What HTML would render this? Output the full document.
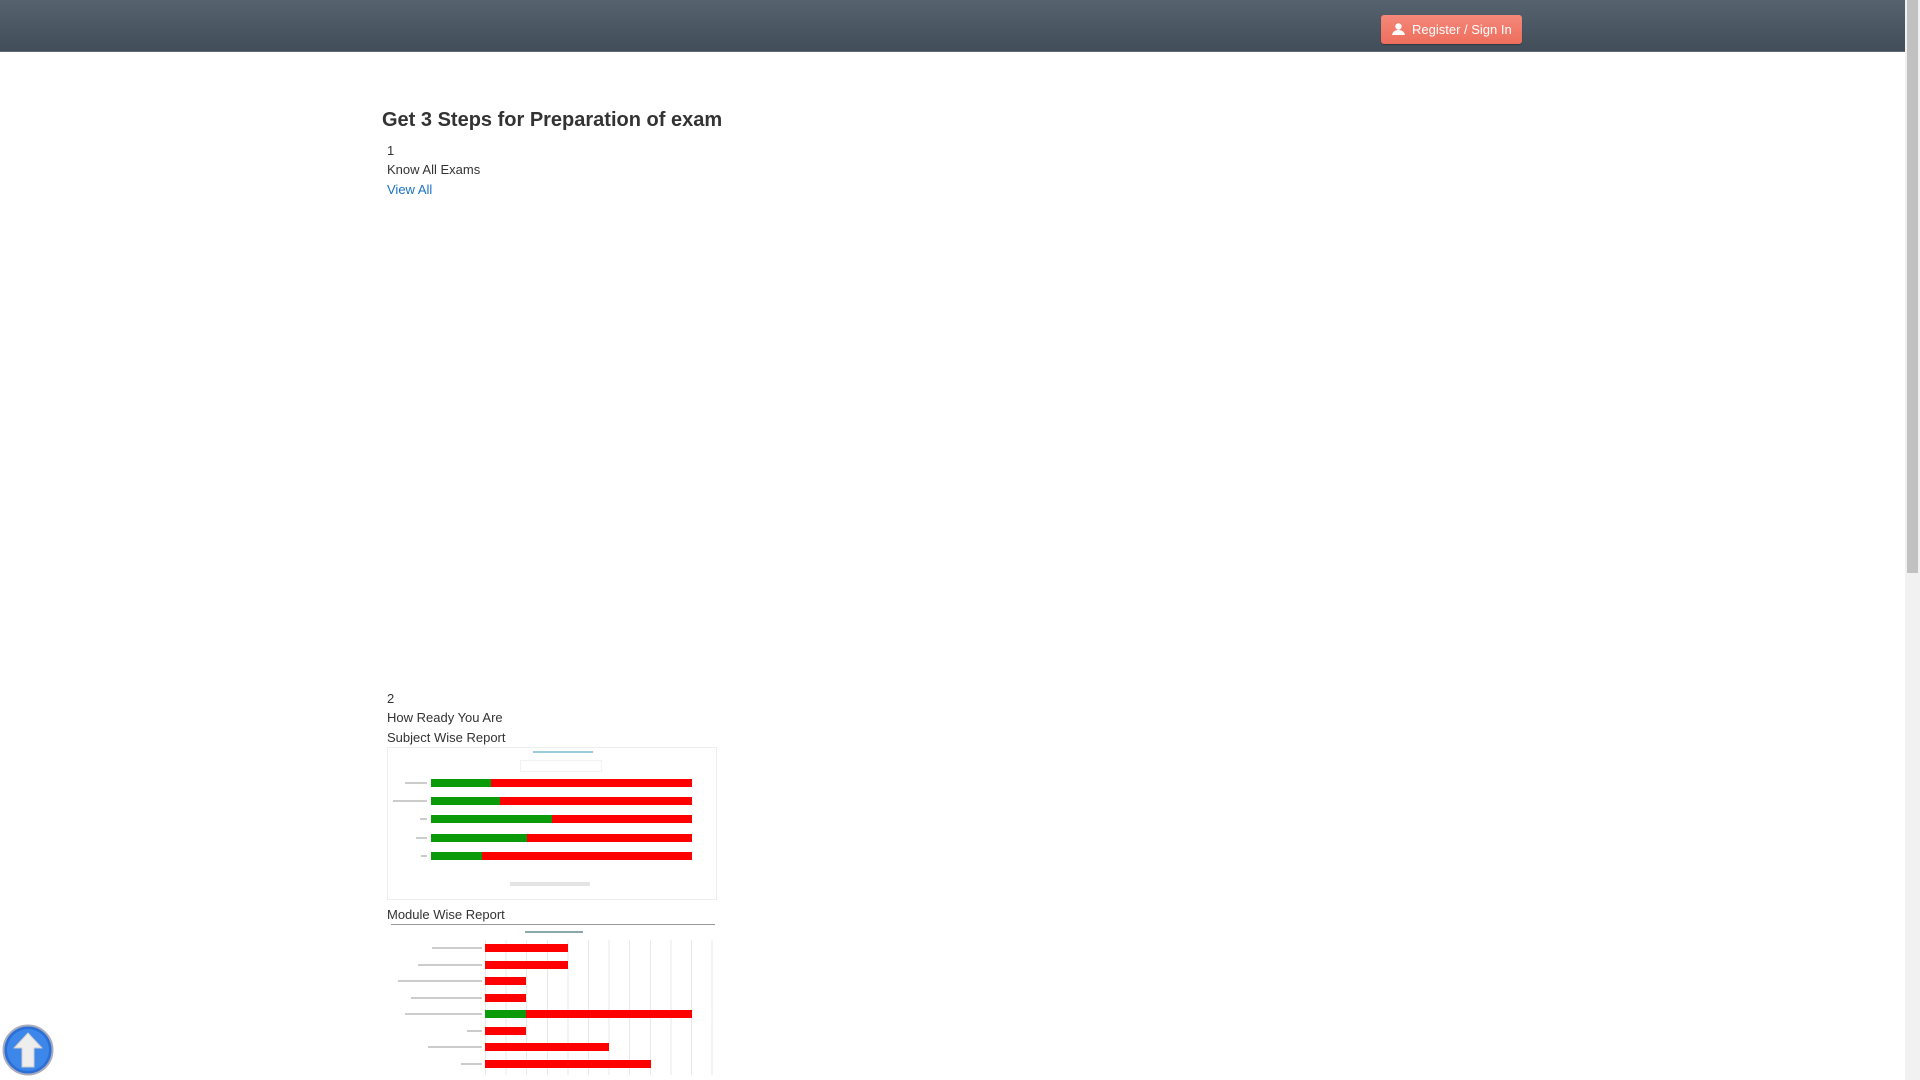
<!DOCTYPE html>
<html><head><style>
body{margin:0;width:1920px;height:1080px;overflow:hidden;background:#fff;font-family:"Liberation Sans",Arial,sans-serif;color:#333;position:relative}
.nav{position:absolute;left:0;top:0;width:1905px;height:51px;background:linear-gradient(#56626e,#414d59);border-bottom:1px solid #5d6772}
.sb{position:absolute;right:0;top:0;width:15px;height:1080px;background:#f1f1f1}
.sb div{position:absolute;left:2px;top:0;width:11px;height:573px;background:#c1c1c1}
.btn{position:absolute;left:1381px;top:15px;width:141px;height:29px;background:linear-gradient(#f4887a,#ee6e5d);border-radius:3px;color:#fff;font-size:13px;line-height:29px;box-shadow:0 1px 1px rgba(0,0,0,.3)}
.btn span{position:absolute;left:31px}
.t{position:absolute;left:387px;font-size:13px}
h1{position:absolute;left:382px;top:109px;margin:0;font-size:20px;font-weight:bold;color:#333}
.bar{position:absolute;height:8px}
.g{background:#0a9a0a}.r{background:#f00}
.lbl{position:absolute;height:2px;background:#ccc}
</style></head><body>
<div class="nav"></div>
<div class="sb"><div></div></div>
<div class="btn"><svg style="position:absolute;left:11px;top:8px" width="13" height="12" viewBox="0 0 13 12"><circle cx="6.5" cy="3.5" r="3.2" fill="#fff"/><path d="M0 12 Q1 7 6.5 7 Q12 7 13 12Z" fill="#fff"/></svg><span>Register / Sign In</span></div>
<h1>Get 3 Steps for Preparation of exam</h1>
<div class="t" style="top:143px">1</div>
<div class="t" style="top:162px">Know All Exams</div>
<div class="t" style="top:182px;color:#1a73c8">View All</div>
<div class="t" style="top:691px">2</div>
<div class="t" style="top:710px">How Ready You Are</div>
<div class="t" style="top:730px">Subject Wise Report</div>
<div style="position:absolute;left:387px;top:747px;width:328px;height:151px;border:1px solid #eee"></div>
<div style="position:absolute;left:533px;top:751px;width:60px;height:2px;background:#9cd"></div>
<div style="position:absolute;left:520px;top:760px;width:80px;height:10px;border:1px solid #f2f2f2"></div>
<div class="lbl" style="left:405px;top:782px;width:22px"></div>
<div class="lbl" style="left:393px;top:800px;width:34px"></div>
<div class="lbl" style="left:420px;top:818px;width:7px"></div>
<div class="lbl" style="left:416px;top:837px;width:11px"></div>
<div class="lbl" style="left:421px;top:855px;width:6px"></div>
<div class="bar g" style="left:431px;top:779px;width:60px"></div><div class="bar r" style="left:491px;top:779px;width:201px"></div>
<div class="bar g" style="left:431px;top:797px;width:69px"></div><div class="bar r" style="left:500px;top:797px;width:192px"></div>
<div class="bar g" style="left:431px;top:815px;width:121px"></div><div class="bar r" style="left:552px;top:815px;width:140px"></div>
<div class="bar g" style="left:431px;top:834px;width:96px"></div><div class="bar r" style="left:527px;top:834px;width:165px"></div>
<div class="bar g" style="left:431px;top:852px;width:51px"></div><div class="bar r" style="left:482px;top:852px;width:210px"></div>
<div style="position:absolute;left:510px;top:882px;width:80px;height:4px;background:#e4e4e4"></div>
<div class="t" style="top:907px">Module Wise Report</div>
<div style="position:absolute;left:391px;top:924px;width:324px;height:1px;background:#999"></div>
<div style="position:absolute;left:525px;top:931px;width:58px;height:2px;background:#8aa"></div>
<div style="position:absolute;left:485px;top:940px;width:230px;height:135px;background:repeating-linear-gradient(90deg,#e8e8e8 0 1px,transparent 1px 20.6px)"></div>
<div class="lbl" style="left:432px;top:947px;width:50px"></div>
<div class="lbl" style="left:418px;top:964px;width:64px"></div>
<div class="lbl" style="left:398px;top:980px;width:84px"></div>
<div class="lbl" style="left:411px;top:997px;width:71px"></div>
<div class="lbl" style="left:405px;top:1013px;width:77px"></div>
<div class="lbl" style="left:467px;top:1030px;width:15px"></div>
<div class="lbl" style="left:428px;top:1046px;width:54px"></div>
<div class="lbl" style="left:461px;top:1063px;width:21px"></div>
<div class="bar r" style="left:485px;top:944px;width:83px"></div>
<div class="bar r" style="left:485px;top:961px;width:83px"></div>
<div class="bar r" style="left:485px;top:977px;width:41px"></div>
<div class="bar r" style="left:485px;top:994px;width:41px"></div>
<div class="bar g" style="left:485px;top:1010px;width:41px"></div><div class="bar r" style="left:526px;top:1010px;width:166px"></div>
<div class="bar r" style="left:485px;top:1027px;width:41px"></div>
<div class="bar r" style="left:485px;top:1043px;width:124px"></div>
<div class="bar r" style="left:485px;top:1060px;width:166px"></div>
<svg style="position:absolute;left:2px;top:1024px" width="52" height="52" viewBox="0 0 52 52"><circle cx="26" cy="26" r="24.5" fill="#2a6fd6" stroke="#aab" stroke-width="2"/><circle cx="26" cy="26" r="21" fill="#3d86ea"/><path d="M26 9 L40 24 L32 24 L32 43 L20 43 L20 24 L12 24Z" fill="#eee" stroke="#ccc" stroke-linejoin="round"/></svg>
</body></html>
